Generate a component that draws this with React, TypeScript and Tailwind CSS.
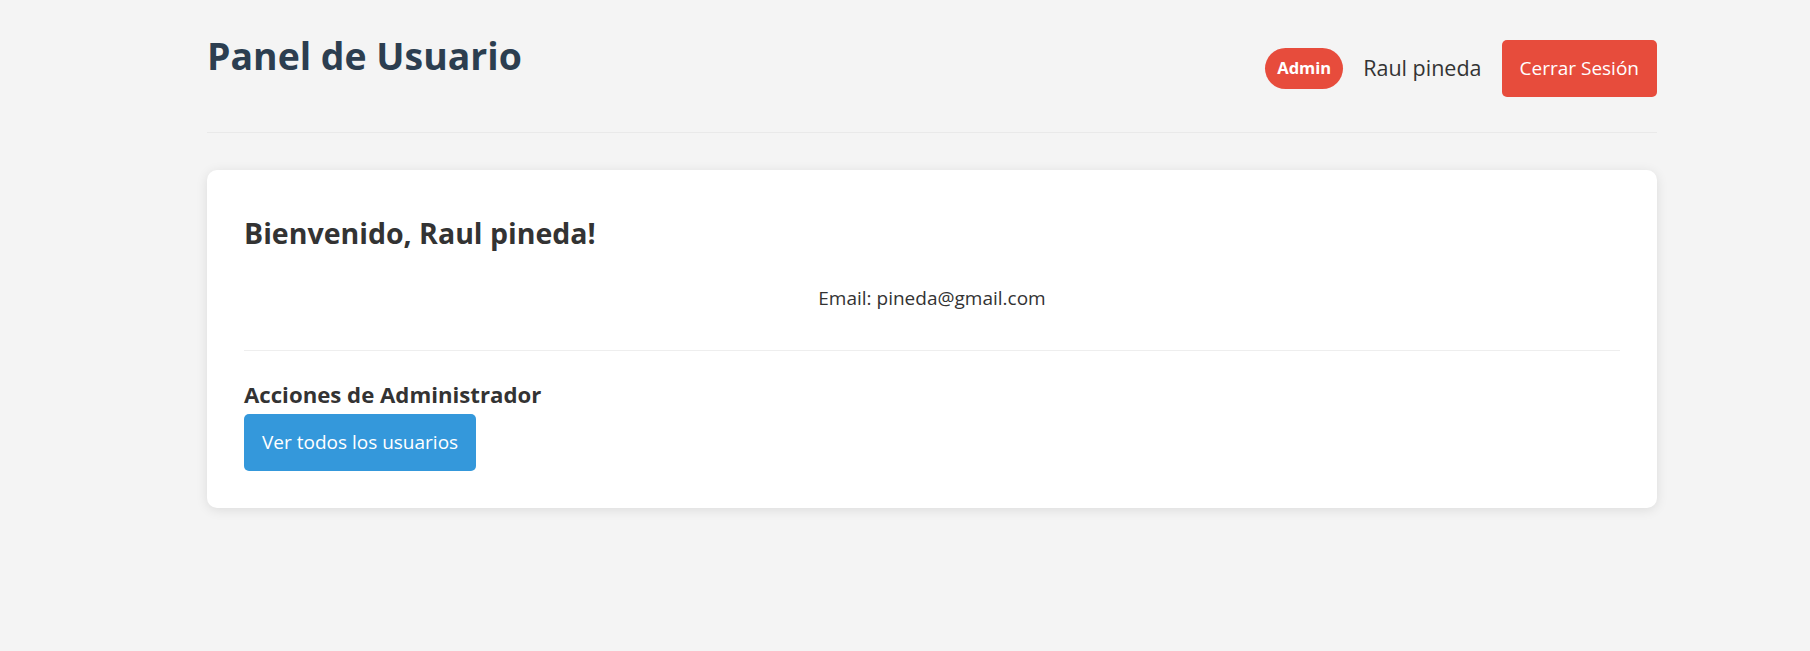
import React from 'react';

const user = {
  name: 'Raul pineda',
  email: 'pineda@gmail.com',
  role: 'Admin',
};

export default function App() {
  return (
    <div
      className="min-h-[651px] w-full bg-[#f4f4f4] text-[#333]"
      style={{ fontFamily: '"Open Sans", "Noto Sans", sans-serif' }}
    >
      <div className="pl-[207px]">
        <div className="w-[1450px]">
          {/* Header */}
          <header className="flex items-start justify-between border-b border-[#e9e9e9] pb-[35px]">
            <h1 className="mt-[32px] text-[37.4px] font-bold leading-[48px] text-[#2c3e50]">
              Panel de Usuario
            </h1>
            <div className="mt-[40px] flex items-center gap-[20px]">
              <span className="flex h-[41px] items-center rounded-full bg-[#e74c3c] px-[12px] text-[16.5px] font-bold text-white">
                {user.role}
              </span>
              <span className="text-[21.5px] text-[#333]">{user.name}</span>
              <button className="h-[57px] rounded-[5px] bg-[#e74c3c] px-[18px] text-[19px] text-white">
                Cerrar Sesión
              </button>
            </div>
          </header>

          {/* Card */}
          <div className="mt-[37px] rounded-[10px] bg-white p-[37px] shadow-[0_2px_12px_rgba(0,0,0,0.1)]">
            <h2 className="mt-[8px] text-[28.5px] font-bold leading-[36px] text-[#333]">
              Bienvenido, {user.name}!
            </h2>
            <p className="mt-[35px] text-center text-[19px] leading-[24px] text-[#333]">
              Email: {user.email}
            </p>
            <div className="mt-[40px] border-t border-[#eeeeee]" />
            <h3 className="mt-[30px] text-[22.2px] font-bold leading-[28px] text-[#333]">
              Acciones de Administrador
            </h3>
            <button className="mt-[5px] h-[57px] rounded-[5px] bg-[#3498db] px-[18px] text-[19px] text-white">
              Ver todos los usuarios
            </button>
          </div>
        </div>
      </div>
    </div>
  );
}
